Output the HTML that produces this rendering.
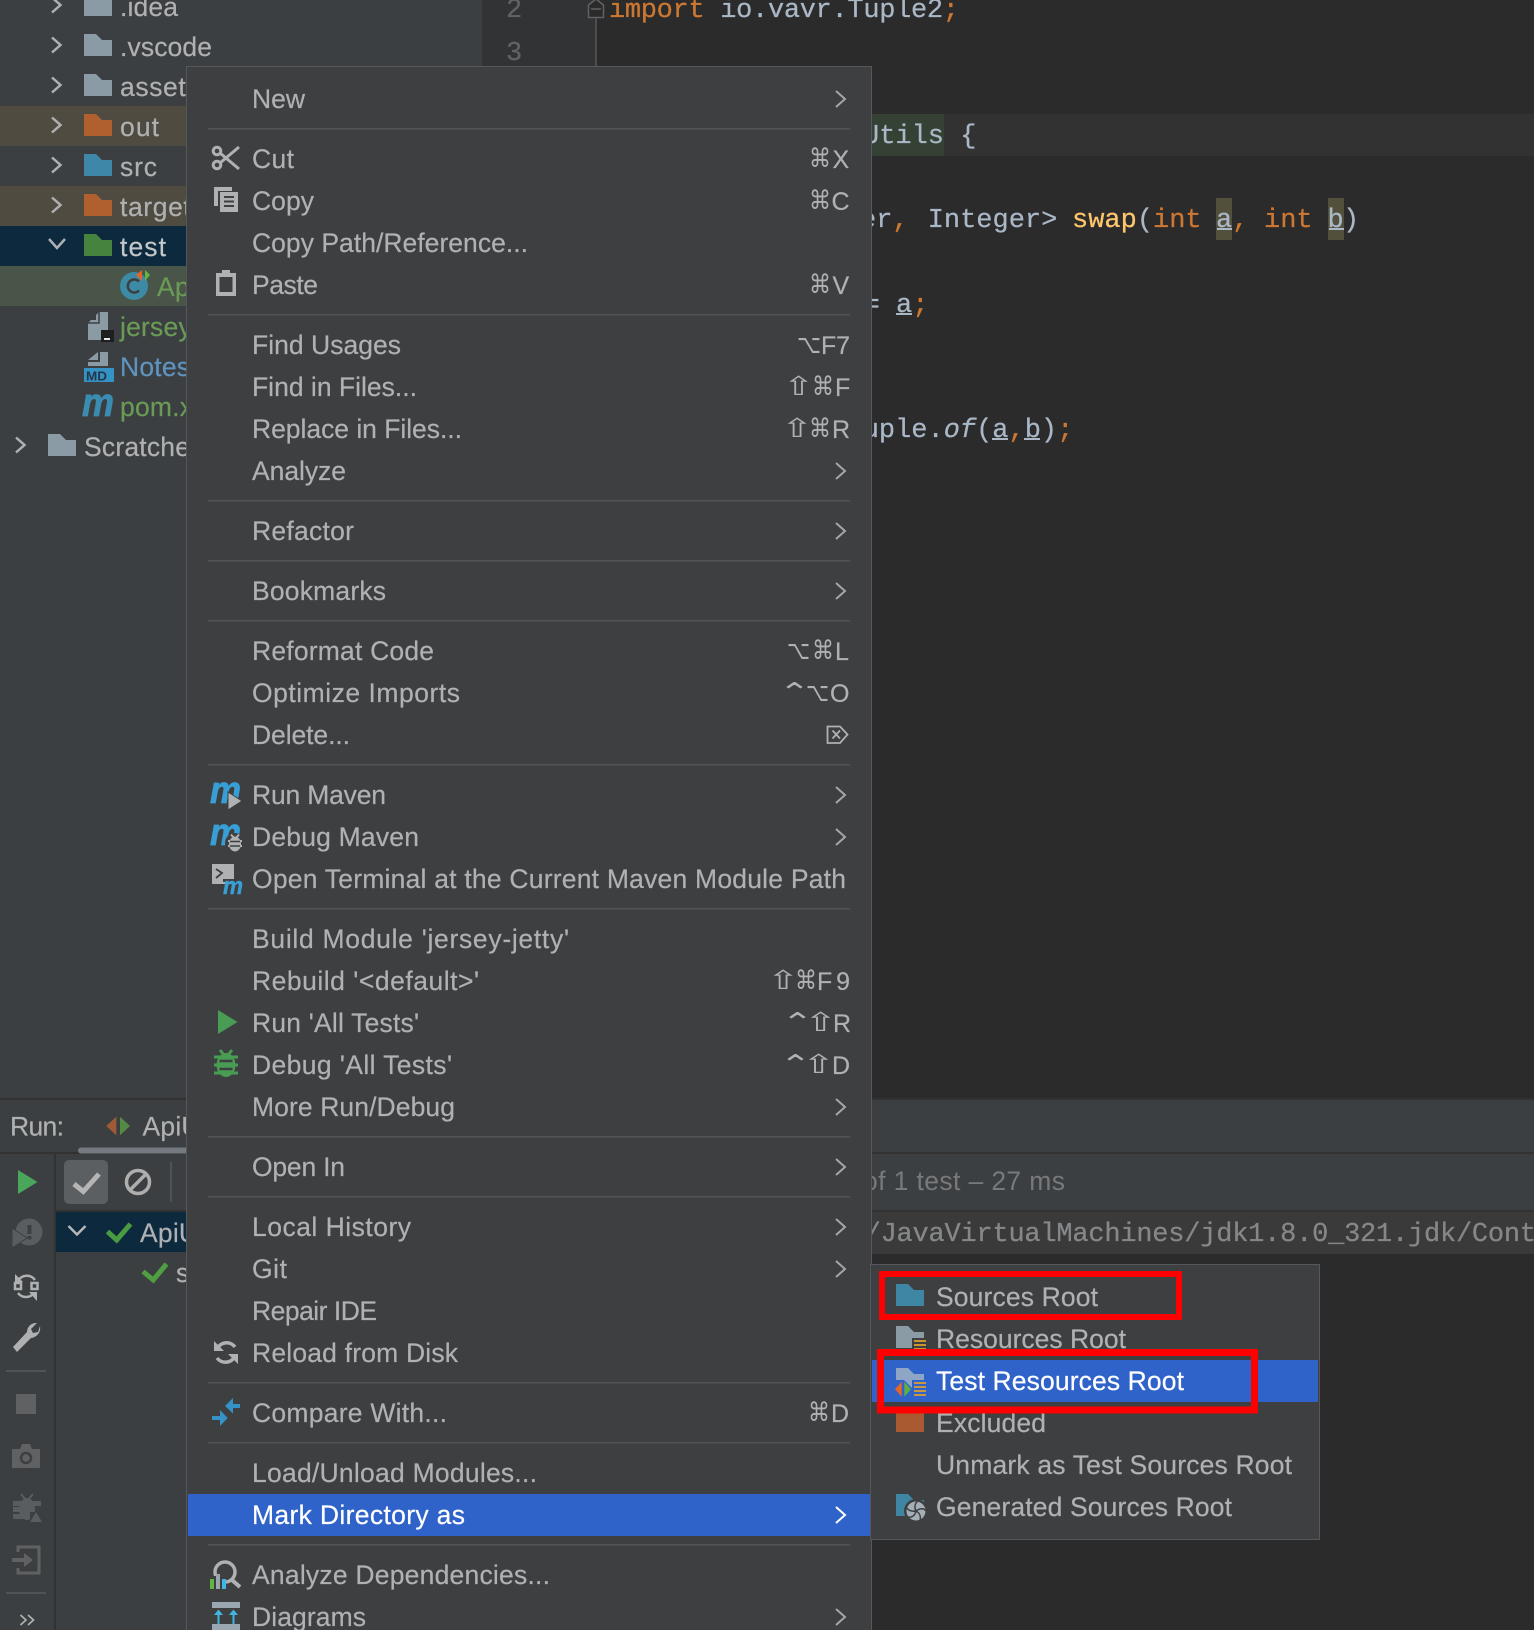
<!DOCTYPE html>
<html lang="en"><head><meta charset="utf-8"><title>IDE context menu</title>
<style>
html,body{margin:0;padding:0;background:#2b2b2b}
svg{display:block}
text{font-family:"Liberation Sans","DejaVu Sans",sans-serif;font-size:26.5px;color:#afb1b2;fill:currentColor;stroke:currentColor;stroke-width:.2px;white-space:pre}
.m{font-family:"Liberation Mono","DejaVu Sans Mono",monospace;font-size:27px;color:#a9b7c6;stroke-width:.25px}
tspan.k{color:#cc7832}tspan.f{color:#ffc66d}
.s{font-family:"DejaVu Sans","Liberation Sans",sans-serif;font-size:26px;stroke-width:0}
.t{font-size:25px}
.chev{fill:none;stroke:#a4a6a8;stroke-width:2}
.tc{fill:none;stroke:#aeb0b1;stroke-width:2.5}
</style></head>
<body>
<svg xmlns="http://www.w3.org/2000/svg" width="1534" height="1630" viewBox="0 0 1534 1630">
<defs>
<path id="fd" d="M0 0H12L18 6H28V22H0Z"/>
<path id="cv" d="M0 -8L9 0L0 8" class="chev"/>
<path id="cvw" d="M0 -8L9 0L0 8" fill="none" stroke="#fff" stroke-width="2"/>
<path id="tv" d="M0 -7.5L8.5 0L0 7.5" class="tc"/>
</defs>

<!-- base -->
<rect width="1534" height="1630" fill="#2b2b2b"/>
<rect x="0" y="0" width="482" height="1098" fill="#3c3f41"/>
<rect x="482" y="0" width="114" height="1098" fill="#313335"/>

<!-- tree rows -->
<rect x="0" y="106" width="482" height="40" fill="#504b41"/>
<rect x="0" y="186" width="482" height="40" fill="#504b41"/>
<rect x="0" y="226" width="482" height="40" fill="#0d293e"/>
<rect x="0" y="266" width="482" height="40" fill="#4a5549"/>

<use href="#tv" x="52" y="5"/><use href="#tv" x="52" y="45"/><use href="#tv" x="52" y="85"/><use href="#tv" x="52" y="125"/><use href="#tv" x="52" y="165"/><use href="#tv" x="52" y="205"/>
<path d="M49 239L57 248L65 239" class="tc"/>
<use href="#tv" x="16" y="445"/>

<use href="#fd" x="84" y="-6" fill="#8a9ba5"/>
<use href="#fd" x="84" y="34" fill="#8a9ba5"/>
<use href="#fd" x="84" y="74" fill="#8a9ba5"/>
<use href="#fd" x="84" y="114" fill="#b05f2f"/>
<use href="#fd" x="84" y="154" fill="#3f87a8"/>
<use href="#fd" x="84" y="194" fill="#b05f2f"/>
<use href="#fd" x="84" y="234" fill="#46833f"/>
<use href="#fd" x="48" y="434" fill="#8a9ba5"/>

<text x="120" y="16" textLength="58">.idea</text>
<text x="120" y="56" textLength="92">.vscode</text>
<text x="120" y="96" letter-spacing=".6">assets</text>
<text x="120" y="136" textLength="39">out</text>
<text x="120" y="176" textLength="37">src</text>
<text x="120" y="216" letter-spacing=".6">target</text>
<text x="120" y="256" textLength="46" style="color:#c3c7ca">test</text>
<text x="157" y="296" style="color:#6a9a55" letter-spacing=".2">ApiUtilsTest</text>
<text x="120" y="336" style="color:#6a9a55" letter-spacing=".2">jersey-jetty.iml</text>
<text x="120" y="376" style="color:#5f93c0" letter-spacing=".2">Notes.md</text>
<text x="120" y="416" style="color:#6a9a55" letter-spacing=".2">pom.xml</text>
<text x="84" y="456" letter-spacing=".2">Scratches and Consoles</text>

<!-- C test class icon -->
<circle cx="134" cy="286" r="14" fill="#3d8aa5"/>
<path d="M139 281.5A6.5 6.5 0 1 0 139 290.5" fill="none" stroke="#3c3f41" stroke-width="2.5"/>
<path d="M142 270L136 275L142 281Z" fill="#e0652c"/><path d="M145 270L150 275L145 281Z" fill="#62b543"/>
<!-- jersey iml -->
<path d="M88 325V323L99 312V312H108V330H101V340H88Z" fill="#8a9ba5"/>
<path d="M88 320L96 312V320Z" fill="#3c3f41"/><path d="M88 323H99V312" fill="none" stroke="#3c3f41" stroke-width="1.5"/>
<rect x="101" y="330" width="13" height="12" fill="#1f1f1f"/><rect x="104" y="338" width="6" height="2" fill="#e8e8e8"/>
<!-- md -->
<path d="M100 352H108V366H88V362H100Z" fill="#8a9ba5"/>
<path d="M88 360L98 352V360Z" fill="#8a9ba5"/>
<rect x="84" y="368" width="30" height="14" fill="#3592c4"/>
<text x="86" y="380.5" style="font-size:13px;font-weight:bold;color:#23384a;stroke-width:0" textLength="21" lengthAdjust="spacingAndGlyphs">MD</text>
<!-- pom m -->
<text x="82" y="416" style="font-size:40px;font-weight:bold;font-style:italic;color:#3a8cb0;stroke-width:.8px" textLength="32" lengthAdjust="spacingAndGlyphs">m</text>

<!-- gutter + code -->
<text x="506" y="17" class="m" style="color:#606366">2</text>
<text x="506" y="60" class="m" style="color:#606366">3</text>
<rect x="597" y="0" width="937" height="1098" fill="#2b2b2b"/>
<path d="M596 18V66" stroke="#555759" stroke-width="1.5"/>
<path d="M588.500 17.500V5L596 -1L603.500 5V17.500Z" fill="#2b2b2b" stroke="#606366" stroke-width="1.500"/>
<path d="M591 9H601" stroke="#606366" stroke-width="1.500"/>
<text x="609" y="17" class="m" textLength="350"><tspan class="k">import</tspan> io.vavr.Tuple2<tspan class="k">;</tspan></text>

<rect x="872" y="114" width="662" height="42" fill="#323232"/>
<rect x="872" y="114" width="72" height="42" fill="#344134"/>
<text x="863" y="143" class="m">Utils {</text>

<rect x="1216" y="198" width="16" height="42" fill="#52503a"/>
<rect x="1328" y="198" width="16" height="42" fill="#52503a"/>
<text x="860" y="227" class="m">er<tspan class="k">,</tspan></text>
<text x="927.700" y="227" class="m">Integer&gt;</text>
<text x="1072" y="227" class="m"><tspan class="f">swap</tspan>(<tspan class="k">int</tspan></text>
<text x="1216" y="227" class="m">a<tspan class="k">,</tspan></text>
<text x="1264" y="227" class="m"><tspan class="k">int</tspan></text>
<text x="1327.500" y="227" class="m">b</text>
<text x="1343" y="227" class="m">)</text>
<rect x="1217" y="228" width="15" height="2" fill="#a9b7c6"/><rect x="1329" y="228" width="15" height="2" fill="#a9b7c6"/>

<text x="863.600" y="312" class="m">= a<tspan class="k">;</tspan></text>
<rect x="896" y="313" width="16" height="2" fill="#a9b7c6"/>

<text x="862.700" y="437" class="m">uple.<tspan font-style="italic">of</tspan>(a<tspan class="k">,</tspan>b)<tspan class="k">;</tspan></text>
<rect x="992" y="438" width="16" height="2" fill="#a9b7c6"/><rect x="1024" y="438" width="16" height="2" fill="#a9b7c6"/>

<!-- run panel -->
<rect x="0" y="1098" width="1534" height="2" fill="#323232"/>
<rect x="0" y="1100" width="1534" height="52" fill="#3c3f41"/>
<rect x="0" y="1152" width="1534" height="2" fill="#323232"/>
<rect x="0" y="1154" width="1534" height="56" fill="#3c3f41"/>
<rect x="0" y="1154" width="54" height="476" fill="#3c3f41"/>
<rect x="56" y="1210" width="1478" height="2" fill="#323232"/>
<rect x="56" y="1212" width="816" height="420" fill="#3c3f41"/>
<rect x="872" y="1212" width="662" height="42" fill="#3a3a3a"/>
<rect x="54" y="1154" width="2" height="476" fill="#323232"/>

<text x="10" y="1135.500" textLength="54">Run:</text>
<path d="M116.300 1116.700L106.300 1126L116.300 1135.300Z" fill="#a05a35"/>
<path d="M120 1116.700L130 1126L120 1135.300Z" fill="#558a45"/>
<text x="142.500" y="1135.500" letter-spacing=".2">ApiUtilsTest</text>
<rect x="78" y="1147.500" width="110" height="6" rx="3" fill="#747a80"/>

<text x="863" y="1190" style="color:#77797b;stroke-width:0" textLength="202">of 1 test – 27 ms</text>
<text x="864.600" y="1241" class="m" style="color:#858789" letter-spacing="-.22">/JavaVirtualMachines/jdk1.8.0_321.jdk/Contents</text>

<path d="M18 1170L37.500 1182L18 1194Z" fill="#4aa65a"/>
<rect x="64" y="1160" width="44" height="44" rx="5" fill="#5b5f61"/>
<path d="M74 1184L83.300 1191.500L99 1174" fill="none" stroke="#b5b5b5" stroke-width="5"/>
<circle cx="138" cy="1182" r="11.500" fill="none" stroke="#aeaeae" stroke-width="3.500"/>
<path d="M130 1190L146 1174" stroke="#aeaeae" stroke-width="3.500"/>
<rect x="170" y="1162" width="2" height="40" fill="#505354"/>

<rect x="56" y="1212" width="130" height="40" fill="#0d293e"/>
<path d="M68.500 1226L77 1234.500L85.500 1226" fill="none" stroke="#b5b7b8" stroke-width="2.500"/>
<path d="M107.500 1231.500L116.700 1240L130.500 1224" fill="none" stroke="#4a9a3f" stroke-width="5"/>
<text x="140" y="1242" letter-spacing=".2">ApiUtilsTest</text>
<path d="M143 1271.500L153.300 1280L166.500 1264" fill="none" stroke="#4f9e42" stroke-width="5"/>
<text x="176" y="1282">swap</text>

<!-- side toolbar -->
<path d="M12 1228L27 1238L12 1248Z" fill="#5a5d5f"/>
<circle cx="29" cy="1232" r="13.500" fill="#5a5d5f"/>
<rect x="27.500" y="1225" width="4" height="9" fill="#3c3f41"/><rect x="27.500" y="1236" width="4" height="3.500" fill="#3c3f41"/>
<path d="M12 1228L27 1238L12 1248Z" fill="#5a5d5f" stroke="#3c3f41" stroke-width="1"/>

<g fill="none" stroke="#aeb0b1" stroke-width="2.500">
<path d="M18 1281A10 10 0 0 1 35 1280"/><path d="M34 1293A10 10 0 0 1 18 1293"/>
<rect x="15" y="1283" width="6" height="6"/><rect x="31.500" y="1283" width="6" height="6"/>
</g>
<path d="M15 1274V1282H23Z" fill="#aeb0b1"/><path d="M37 1301V1292H29Z" fill="#aeb0b1"/>

<path d="M13 1347L27 1332A9 9 0 0 1 37 1323L31 1329L33 1333L38 1332L40 1326A10 10 0 0 1 31 1338L17 1352Z" fill="#aeb0b1"/>
<rect x="6" y="1370" width="40" height="2" fill="#505354"/>
<rect x="16" y="1394" width="20" height="20" fill="#5f6163"/>
<path d="M12 1449H20L22 1444H30L32 1449H40V1468H12Z" fill="#5f6163"/>
<circle cx="26" cy="1458" r="5" fill="none" stroke="#3c3f41" stroke-width="2.500"/>
<g fill="#5a5d5f">
<ellipse cx="27" cy="1509" rx="8" ry="11"/>
<path d="M14 1502H40V1505H14ZM14 1508H22V1511H14ZM14 1515H40V1518H14ZM21 1494L26 1500M33 1494L28 1500" stroke="#5a5d5f" stroke-width="2"/>
<path d="M30 1512L42 1512L42 1523L30 1523Z" fill="#3c3f41"/>
<path d="M30 1522L36 1512L42 1522Z"/>
</g>
<path d="M18 1552V1547H39V1573H18V1568" fill="none" stroke="#5f6163" stroke-width="3"/>
<path d="M12 1558H24V1553L33 1560L24 1567V1562H12Z" fill="#5f6163"/>
<rect x="6" y="1592" width="40" height="2" fill="#505354"/>
<path d="M20.500 1615L26 1620L20.500 1625M28 1615L33.500 1620L28 1625" fill="none" stroke="#aeb0b1" stroke-width="1.700"/>

<!-- main context menu -->
<rect x="186.500" y="66.500" width="685" height="1570" fill="#3d3f41" stroke="#55585a" stroke-width="1"/>
<rect x="188" y="1494" width="682" height="42" fill="#2f63c9"/>

<g fill="#515354">
<rect x="208" y="128" width="642" height="1.500"/><rect x="208" y="314" width="642" height="1.500"/>
<rect x="208" y="500" width="642" height="1.500"/><rect x="208" y="560" width="642" height="1.500"/>
<rect x="208" y="620" width="642" height="1.500"/><rect x="208" y="764" width="642" height="1.500"/>
<rect x="208" y="908" width="642" height="1.500"/><rect x="208" y="1136" width="642" height="1.500"/>
<rect x="208" y="1196" width="642" height="1.500"/><rect x="208" y="1382" width="642" height="1.500"/>
<rect x="208" y="1442" width="642" height="1.500"/><rect x="208" y="1544" width="642" height="1.500"/>
</g>

<text x="252" y="108" textLength="53">New</text>
<text x="252" y="168" textLength="42">Cut</text>
<text x="252" y="210" textLength="62">Copy</text>
<text x="252" y="252" textLength="276">Copy Path/Reference...</text>
<text x="252" y="294" textLength="66">Paste</text>
<text x="252" y="354" textLength="149">Find Usages</text>
<text x="252" y="396" textLength="165">Find in Files...</text>
<text x="252" y="438" textLength="210">Replace in Files...</text>
<text x="252" y="480" textLength="94">Analyze</text>
<text x="252" y="540" textLength="102">Refactor</text>
<text x="252" y="600" textLength="134">Bookmarks</text>
<text x="252" y="660" textLength="182">Reformat Code</text>
<text x="252" y="702" textLength="208">Optimize Imports</text>
<text x="252" y="744" textLength="98">Delete...</text>
<text x="252" y="804" textLength="134">Run Maven</text>
<text x="252" y="846" textLength="167">Debug Maven</text>
<text x="252" y="888" textLength="594">Open Terminal at the Current Maven Module Path</text>
<text x="252" y="948" textLength="317">Build Module 'jersey-jetty'</text>
<text x="252" y="990" textLength="227">Rebuild '&lt;default&gt;'</text>
<text x="252" y="1032" textLength="167">Run 'All Tests'</text>
<text x="252" y="1074" textLength="200">Debug 'All Tests'</text>
<text x="252" y="1116" textLength="203">More Run/Debug</text>
<text x="252" y="1176" textLength="93">Open In</text>
<text x="252" y="1236" textLength="159">Local History</text>
<text x="252" y="1278" textLength="35">Git</text>
<text x="252" y="1320" textLength="125">Repair IDE</text>
<text x="252" y="1362" textLength="206">Reload from Disk</text>
<text x="252" y="1422" textLength="195">Compare With...</text>
<text x="252" y="1482" textLength="285">Load/Unload Modules...</text>
<text x="252" y="1524" textLength="213" style="color:#fff">Mark Directory as</text>
<text x="252" y="1584" textLength="298">Analyze Dependencies...</text>
<text x="252" y="1626" textLength="114">Diagrams</text>

<!-- shortcuts -->
<text x="809" y="167" class="s" textLength="22" lengthAdjust="spacingAndGlyphs">⌘</text><text x="832.500" y="168" class="t">X</text>
<text x="809" y="209" class="s" textLength="22" lengthAdjust="spacingAndGlyphs">⌘</text><text x="831.500" y="210" class="t">C</text>
<text x="809" y="293" class="s" textLength="22" lengthAdjust="spacingAndGlyphs">⌘</text><text x="832.500" y="294" class="t">V</text>
<text x="797" y="353" class="s" textLength="24" lengthAdjust="spacingAndGlyphs">⌥</text><text x="821" y="354" class="t" textLength="29">F7</text>
<text x="783" y="395" class="s" textLength="31" lengthAdjust="spacingAndGlyphs">⇧</text><text x="812" y="395" class="s" textLength="22" lengthAdjust="spacingAndGlyphs">⌘</text><text x="835" y="396" class="t">F</text>
<text x="781" y="437" class="s" textLength="32" lengthAdjust="spacingAndGlyphs">⇧</text><text x="809" y="437" class="s" textLength="22" lengthAdjust="spacingAndGlyphs">⌘</text><text x="832" y="438" class="t">R</text>
<text x="787" y="659" class="s" textLength="23" lengthAdjust="spacingAndGlyphs">⌥</text><text x="812" y="659" class="s" textLength="22" lengthAdjust="spacingAndGlyphs">⌘</text><text x="835" y="660" class="t">L</text>
<text x="778.500" y="701" class="s" textLength="32" lengthAdjust="spacingAndGlyphs">⌃</text><text x="806" y="701" class="s" textLength="23" lengthAdjust="spacingAndGlyphs">⌥</text><text x="830" y="702" class="t">O</text>
<text x="767" y="989" class="s" textLength="32" lengthAdjust="spacingAndGlyphs">⇧</text><text x="795" y="989" class="s" textLength="22" lengthAdjust="spacingAndGlyphs">⌘</text><text x="817" y="990" class="t" textLength="33">F9</text>
<text x="781.500" y="1031" class="s" textLength="32" lengthAdjust="spacingAndGlyphs">⌃</text><text x="804" y="1031" class="s" textLength="33" lengthAdjust="spacingAndGlyphs">⇧</text><text x="833" y="1032" class="t">R</text>
<text x="779.500" y="1073" class="s" textLength="32" lengthAdjust="spacingAndGlyphs">⌃</text><text x="802" y="1073" class="s" textLength="33" lengthAdjust="spacingAndGlyphs">⇧</text><text x="832" y="1074" class="t">D</text>
<text x="808" y="1421" class="s" textLength="22" lengthAdjust="spacingAndGlyphs">⌘</text><text x="831" y="1422" class="t">D</text>
<!-- delete key -->
<path d="M827.500 726.500H840L847.500 734.500L840 743H827.500Z" fill="none" stroke="#afb1b2" stroke-width="1.800"/>
<path d="M832.500 730.500L840 738.500M840 730.500L832.500 738.500" stroke="#afb1b2" stroke-width="1.800"/>

<!-- chevrons -->
<use href="#cv" x="836" y="99"/><use href="#cv" x="836" y="471"/><use href="#cv" x="836" y="531"/><use href="#cv" x="836" y="591"/>
<use href="#cv" x="836" y="795"/><use href="#cv" x="836" y="837"/><use href="#cv" x="836" y="1107"/><use href="#cv" x="836" y="1167"/>
<use href="#cv" x="836" y="1227"/><use href="#cv" x="836" y="1269"/><use href="#cvw" x="836" y="1515"/><use href="#cv" x="836" y="1617"/>

<!-- cut -->
<g fill="none" stroke="#afb1b3" stroke-width="3">
<circle cx="217" cy="151" r="3.800"/><circle cx="217" cy="165" r="3.800"/>
<path d="M220 153L239 169M220 163L239 147"/>
</g>
<!-- copy -->
<path d="M214 187H232V191H218V206H214Z" fill="#afb1b3"/>
<rect x="220" y="192" width="18" height="20" fill="#afb1b3"/>
<path d="M224 197H234M224 201.500H234M224 206H234" stroke="#3d3f41" stroke-width="2"/>
<!-- paste -->
<path d="M216 273H222V270H230V273H236V296H216Z" fill="#afb1b3"/>
<rect x="219.500" y="277" width="13" height="15" fill="#3d3f41"/>
<!-- run maven -->
<text x="210" y="803" style="font-size:38px;font-weight:bold;font-style:italic;color:#389fd6;stroke-width:.8px" textLength="31" lengthAdjust="spacingAndGlyphs">m</text>
<path d="M228 792L242 801L228 810Z" fill="#afb1b3" stroke="#3d3f41" stroke-width="1"/>
<!-- debug maven -->
<text x="210" y="845" style="font-size:38px;font-weight:bold;font-style:italic;color:#389fd6;stroke-width:.8px" textLength="31" lengthAdjust="spacingAndGlyphs">m</text>
<circle cx="235" cy="843" r="10" fill="#3d3f41"/>
<ellipse cx="235" cy="844" rx="6" ry="7.500" fill="#afb1b3"/>
<path d="M228 841H242M228 846H242M231 834.500L234 838M239 834.500L236 838" stroke="#afb1b3" stroke-width="2"/>
<path d="M230 841.500H240M230 846H240" stroke="#3d3f41" stroke-width="1.500"/>
<!-- terminal -->
<rect x="212" y="864" width="22" height="20" fill="#afb1b3"/>
<path d="M216 869L222 873L216 878" fill="none" stroke="#3d3f41" stroke-width="1.800"/>
<rect x="223" y="879" width="12" height="3" fill="#3d3f41"/>
<text x="223" y="894" style="font-size:24px;font-weight:bold;font-style:italic;color:#389fd6;stroke-width:.4px" textLength="20" lengthAdjust="spacingAndGlyphs">m</text>
<!-- run -->
<path d="M218 1010L237.500 1022L218 1034Z" fill="#499c54"/>
<!-- debug bug -->
<g fill="#499c54" stroke="#499c54">
<ellipse cx="226" cy="1065" rx="9.500" ry="12" stroke="none"/>
<path d="M214 1057H238M214 1065H238M214 1073H238M220 1050L224 1055M232 1050L228 1055" stroke-width="3" fill="none"/>
</g>
<path d="M219.500 1061H232.500M219.500 1069H232.500" stroke="#3d3f41" stroke-width="2.500"/>
<!-- reload -->
<g fill="none" stroke="#afb1b3" stroke-width="3.500">
<path d="M217 1349A10.500 10.500 0 0 1 235 1347"/><path d="M235 1356A10.500 10.500 0 0 1 217 1358"/>
</g>
<path d="M214 1341V1351H224Z" fill="#afb1b3"/><path d="M238 1364V1354H228Z" fill="#afb1b3"/>
<!-- compare -->
<g fill="#3592c4">
<path d="M240 1404V1408H233V1413.500L225 1406L233 1398V1404Z"/>
<path d="M212 1416H220V1410L227.700 1418L220 1426V1420H212Z"/>
</g>
<!-- analyze deps -->
<circle cx="225" cy="1572" r="10" fill="none" stroke="#afb1b3" stroke-width="3.500"/>
<path d="M232 1580L240 1587" stroke="#afb1b3" stroke-width="4"/>
<rect x="209" y="1576" width="16" height="13" fill="#3d3f41"/>
<rect x="210" y="1579" width="4" height="10" fill="#62b543"/>
<rect x="216" y="1574" width="4" height="15" fill="#9aa7b0"/>
<rect x="222" y="1579" width="4" height="10" fill="#40b6e0"/>
<!-- diagrams -->
<rect x="212" y="1602" width="28" height="6" fill="#9aa7b0"/><rect x="212" y="1624" width="28" height="6" fill="#9aa7b0"/>
<path d="M218.500 1624V1614M233.500 1624V1614" stroke="#40b6e0" stroke-width="2"/>
<path d="M214 1615L218.500 1609.500L223 1615ZM229 1615L233.500 1609.500L238 1615Z" fill="#40b6e0"/>

<!-- submenu -->
<rect x="870.500" y="1264.500" width="449" height="275" fill="#3d3f41" stroke="#55585a" stroke-width="1"/>
<rect x="872" y="1360" width="446" height="42" fill="#2f63c9"/>

<use href="#fd" x="896" y="1284" fill="#3e86a3"/>
<text x="936" y="1306" textLength="162">Sources Root</text>

<use href="#fd" x="896" y="1326" fill="#8a9ba5"/>
<rect x="912" y="1338" width="14" height="12" fill="#3d3f41"/>
<path d="M914 1341H926M914 1345H926M914 1349H926" stroke="#e0a030" stroke-width="1.800"/>
<text x="936" y="1348" textLength="190">Resources Root</text>

<use href="#fd" x="896" y="1368" fill="#8ea5c6"/>
<rect x="912" y="1380" width="14" height="18" fill="#2f63c9"/>
<path d="M892 1380L904 1380L914 1390L904 1400L892 1396Z" fill="#2f63c9"/>
<path d="M901.700 1381.700L895 1389.300L901.700 1396.700Z" fill="#e8652a"/>
<path d="M904.300 1381.700L911 1389.300L904.300 1396.700Z" fill="#5fb040"/>
<path d="M914 1383H926M914 1387H926M914 1391H926M914 1395H926" stroke="#e0a030" stroke-width="1.800"/>
<text x="936" y="1390" textLength="248" style="color:#fff">Test Resources Root</text>

<rect x="896" y="1410" width="28" height="22" fill="#aa5a30"/>
<text x="936" y="1432" textLength="110">Excluded</text>

<text x="936" y="1474" textLength="356">Unmark as Test Sources Root</text>

<use href="#fd" x="896" y="1494" fill="#3e86a3"/>
<circle cx="916" cy="1511" r="12" fill="#3d3f41"/>
<circle cx="916" cy="1511" r="9.500" fill="#a3aeb6"/>
<g fill="none" stroke="#3d3f41" stroke-width="1.500">
<path d="M916 1511C914 1507 915 1503 918 1501"/><path d="M916 1511C920 1508 924 1508 926 1511"/>
<path d="M916 1511C920 1513 921 1517 920 1521"/><path d="M916 1511C915 1516 911 1518 908 1517"/>
<path d="M916 1511C911 1512 908 1510 906 1507"/>
</g>
<circle cx="916" cy="1511" r="1.500" fill="#3d3f41"/>
<text x="936" y="1516" textLength="296">Generated Sources Root</text>

<!-- red annotation boxes -->
<rect x="882" y="1274" width="297" height="43" fill="none" stroke="#ff0000" stroke-width="6"/>
<rect x="880.500" y="1352.500" width="374" height="57.500" fill="none" stroke="#ff0000" stroke-width="7"/>
</svg>
</body></html>
